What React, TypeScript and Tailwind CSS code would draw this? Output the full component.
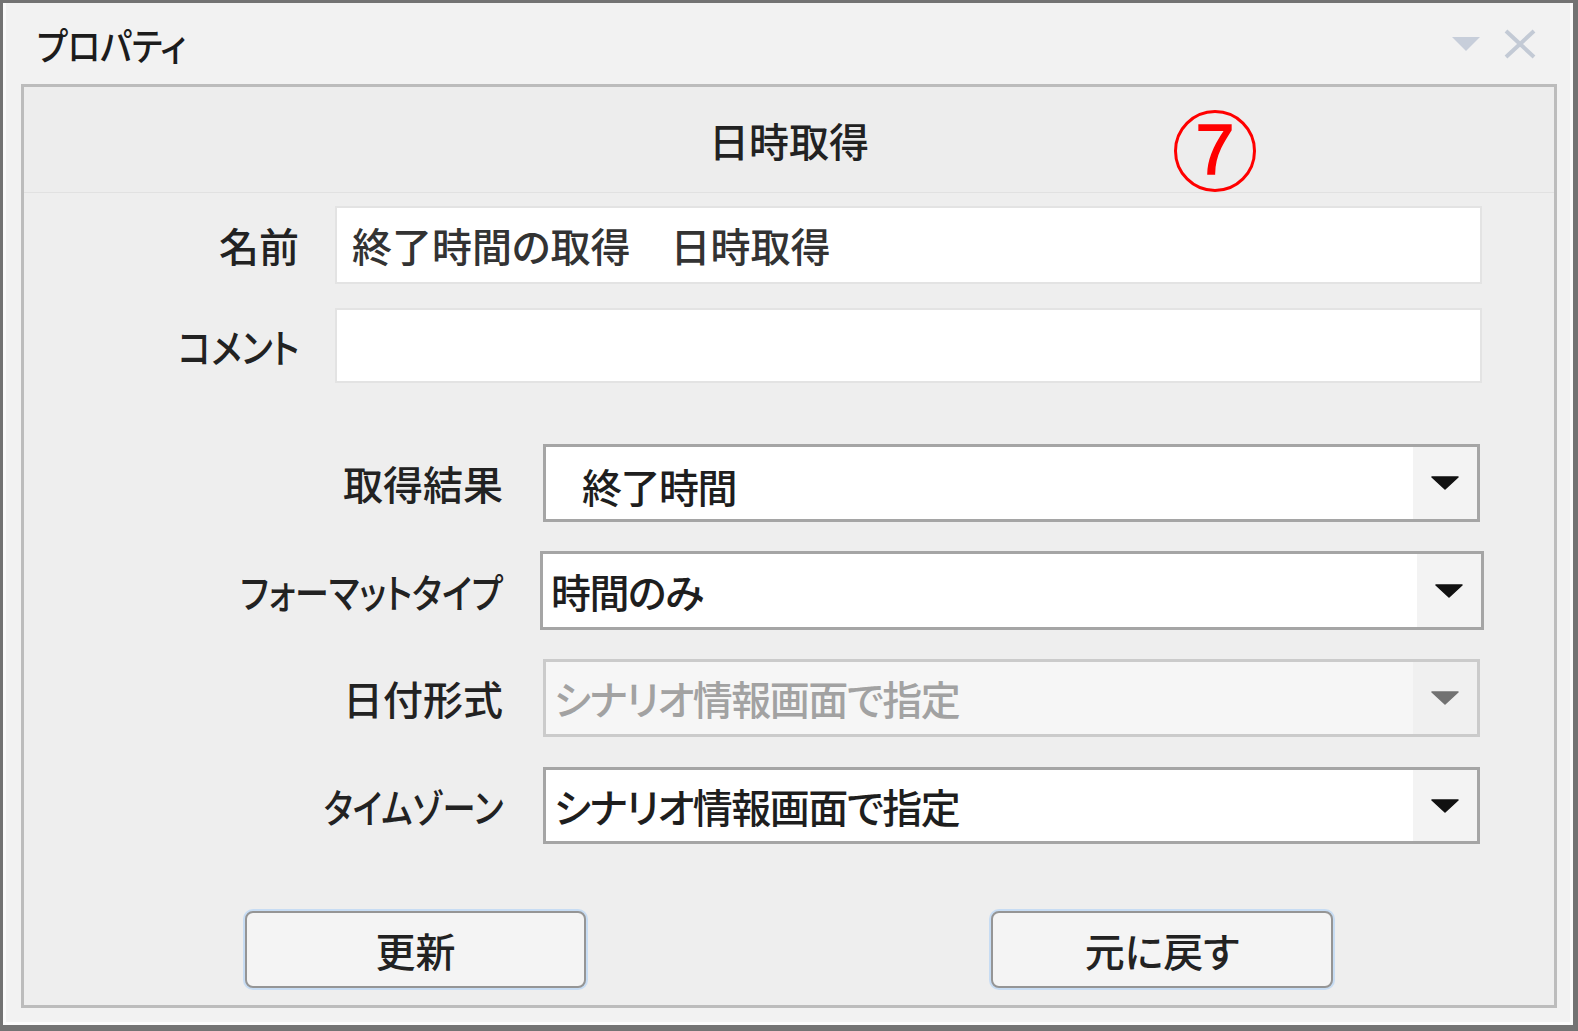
import React from 'react';

const font = "[font-family:'Noto_Sans_CJK_JP','Noto_Sans',sans-serif] [font-feature-settings:'palt'] font-medium";

const Arrow = ({ disabled }: { disabled?: boolean }) => (
  <svg width="28" height="14" viewBox="0 0 28 14">
    <polygon points="1,1 27,1 14,13" fill={disabled ? '#727272' : '#111111'} stroke={disabled ? '#727272' : '#111111'} strokeWidth="1.5" strokeLinejoin="round" />
  </svg>
);

type SelectProps = {
  value: string;
  disabled?: boolean;
  textPad: string;
  width: string;
};

const Select = ({ value, disabled, textPad, width }: SelectProps) => (
  <div
    className={`${width} h-full flex items-stretch border-[3px] ${
      disabled ? 'border-[#cbcbcb] bg-[#f6f6f6]' : 'border-[#a5a5a5] bg-white'
    }`}
  >
    <div
      className={`flex-1 flex items-center ${textPad} text-[40px] leading-none tracking-[-1.5px] ${
        disabled ? 'text-[#a2a2a2]' : 'text-[#1e1e1e]'
      }`}
    >
      {value}
    </div>
    <div className={`w-[64px] flex items-center justify-center ${disabled ? 'bg-[#f0f0f0]' : 'bg-[#f3f3f3]'}`}>
      <Arrow disabled={disabled} />
    </div>
  </div>
);

const label = 'text-right text-[40px] leading-none text-[#222]';

export default function App() {
  return (
    <div className={`w-[1578px] h-[1031px] border-t-[3px] border-l-[3px] border-r-[5px] border-b-[6px] border-[#737373] ${font}`}>
      <div className="h-full flex flex-col bg-[#f2f2f2] border-l-[3px] border-r-[3px] border-b-[3px] border-[#fbfbfb]">
        {/* title bar */}
        <div className="h-[81px] flex items-center pl-[31px] pr-[34px]">
          <span className="inline-block origin-left scale-x-[0.88] text-[38px] text-[#1c1c1c] leading-none">プロパティ</span>
          <div className="ml-auto flex items-center gap-[24px]">
            <svg width="28" height="16" viewBox="0 0 28 16">
              <polygon points="0,1 28,1 14,15" fill="#c7ceda" />
            </svg>
            <svg width="32" height="30" viewBox="0 0 32 30">
              <path d="M2 2 L30 28 M30 2 L2 28" stroke="#c3cad5" strokeWidth="4" />
            </svg>
          </div>
        </div>

        {/* panel */}
        <div className="flex-1 ml-[15px] mr-[13px] mb-[14px] border-[3px] border-[#bcbcbc] bg-[#eeeeee] flex flex-col">
          <div className="relative h-[106px] flex items-center justify-center border-b border-[#e1e1e1] bg-[#ededed]">
            <span className="text-[40px] leading-none text-[#222]">日時取得</span>
            <div className="absolute left-[1150px] top-[23px] w-[82px] h-[82px] rounded-full border-[3px] border-[#ff0000] flex items-center justify-center">
              <span className="[font-family:'Liberation_Sans',sans-serif] font-normal text-[70px] leading-none text-[#ff0000] [-webkit-text-stroke:1.5px_#ff0000] -mt-[2px]">7</span>
            </div>
          </div>

          <div className="mt-[13px] h-[78px] flex items-center gap-[36px]">
            <div className={`w-[275px] ${label}`}>名前</div>
            <div className="w-[1147px] h-full bg-white border-2 border-[#e3e3e3] flex items-center pl-[15px] text-[40px] leading-none text-[#333]">
              終了時間の取得　日時取得
            </div>
          </div>

          <div className="mt-[24px] h-[75px] flex items-center gap-[36px]">
            <div className={`w-[275px] ${label}`}>
              <span className="inline-block origin-right scale-x-[0.87]">コメント</span>
            </div>
            <div className="w-[1147px] h-full bg-white border-2 border-[#e3e3e3]" />
          </div>

          <div className="mt-[61px] h-[78px] flex items-center gap-[40px]">
            <div className={`w-[479px] ${label}`}>取得結果</div>
            <Select value="終了時間" textPad="pl-[36px] pt-[6px]" width="w-[937px]" />
          </div>

          <div className="mt-[29px] h-[79px] flex items-center gap-[37px]">
            <div className={`w-[479px] ${label}`}>
              <span className="inline-block origin-right scale-x-[0.85]">フォーマットタイプ</span>
            </div>
            <Select value="時間のみ" textPad="pl-[8px]" width="w-[944px]" />
          </div>

          <div className="mt-[29px] h-[78px] flex items-center gap-[40px]">
            <div className={`w-[479px] ${label}`}>日付形式</div>
            <Select value="シナリオ情報画面で指定" textPad="pl-[8px]" width="w-[937px]" disabled />
          </div>

          <div className="mt-[30px] h-[77px] flex items-center gap-[40px]">
            <div className={`w-[479px] ${label}`}>
              <span className="inline-block origin-right scale-x-[0.83]">タイムゾーン</span>
            </div>
            <Select value="シナリオ情報画面で指定" textPad="pl-[8px]" width="w-[937px]" />
          </div>

          <div className="mt-[67px] ml-[221px] flex gap-[405px]">
            <button className="w-[341px] h-[77px] rounded-[8px] border-2 border-[#959595] bg-[#f4f4f4] shadow-[0_0_0_2px_#c7dcf3] text-[40px] leading-none text-[#222]">
              更新
            </button>
            <button className="w-[342px] h-[77px] rounded-[8px] border-2 border-[#959595] bg-[#f4f4f4] shadow-[0_0_0_2px_#c7dcf3] text-[40px] leading-none text-[#222]">
              元に戻す
            </button>
          </div>
        </div>
      </div>
    </div>
  );
}
